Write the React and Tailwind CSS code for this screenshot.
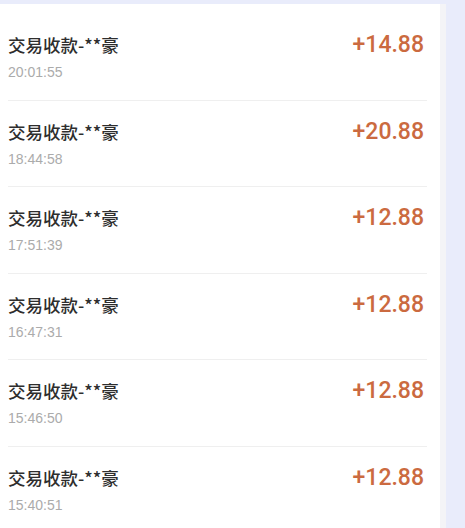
import React from 'react';

const records = [
  { name: '交易收款-**豪', time: '20:01:55', amount: '+14.88' },
  { name: '交易收款-**豪', time: '18:44:58', amount: '+20.88' },
  { name: '交易收款-**豪', time: '17:51:39', amount: '+12.88' },
  { name: '交易收款-**豪', time: '16:47:31', amount: '+12.88' },
  { name: '交易收款-**豪', time: '15:46:50', amount: '+12.88' },
  { name: '交易收款-**豪', time: '15:40:51', amount: '+12.88' },
];

const Row = ({ item, last }) => (
  <div className={`flex items-start justify-between pt-[19px] pb-[17.5px] pr-[3px] ${last ? '' : 'border-b border-[#efefef]'}`}>
    <div className="flex flex-col">
      <span className="text-[17.5px] leading-[24px] font-medium text-[#2e2e2e]" style={{ fontFamily: '"Noto Sans CJK SC", "Noto Sans", sans-serif' }}>
        {item.name}
      </span>
      <span className="mt-[5px] text-[14px] leading-[20px] text-[#ababab]" style={{ fontFamily: '"Liberation Sans", Arial, sans-serif' }}>
        {item.time}
      </span>
    </div>
    <span className="text-[23px] leading-[24px] font-medium text-[#cb6a40]" style={{ fontFamily: 'Roboto, "Liberation Sans", sans-serif' }}>
      {item.amount}
    </span>
  </div>
);

export default function App() {
  return (
    <div className="w-[465px] h-[528px] overflow-hidden bg-[#e9ecfb] pt-[4px]">
      <div className="w-[446px] h-full flex">
        <div className="w-[440px] bg-white pt-[10px] pl-[8px] pr-[13px]">
          {records.map((item, i) => (
            <Row key={i} item={item} last={i === records.length - 1} />
          ))}
        </div>
        <div className="w-[6px] bg-[#f4f4f7]" />
      </div>
    </div>
  );
}
